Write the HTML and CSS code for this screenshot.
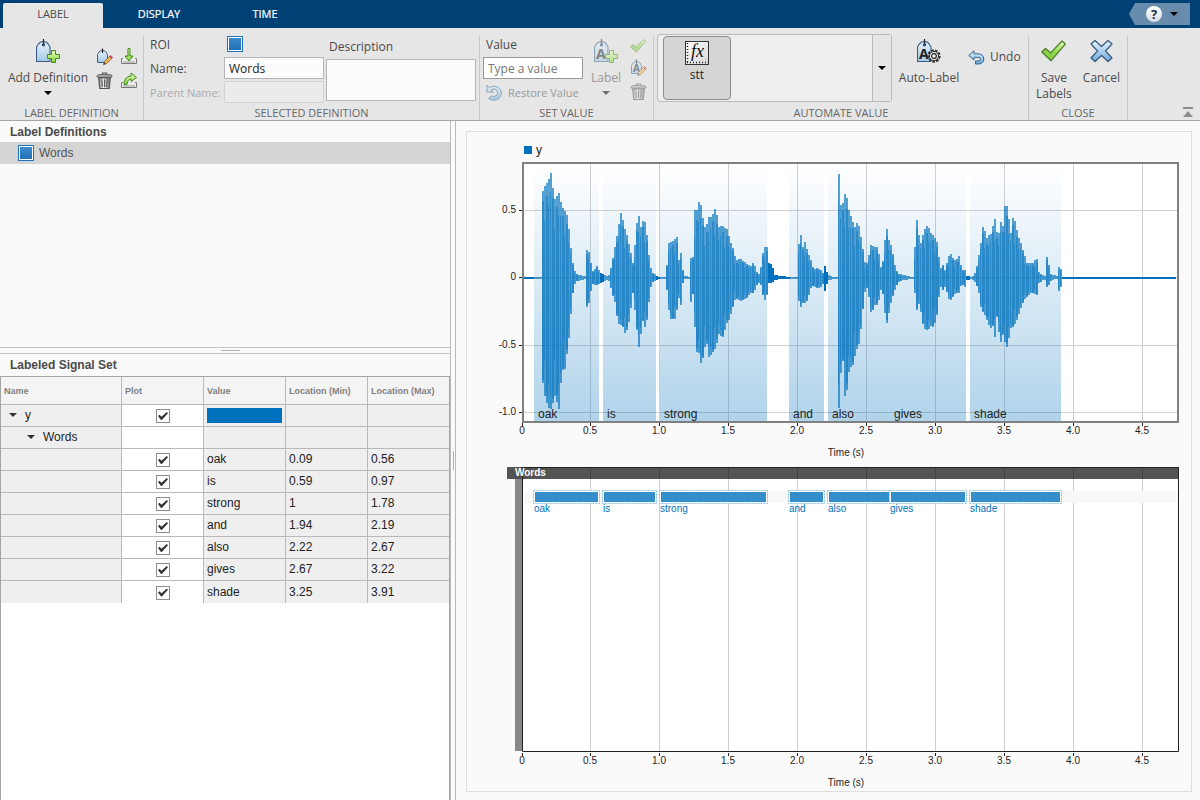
FILE: index.html
```html
<!DOCTYPE html>
<html lang="en">
<head>
<meta charset="utf-8">
<title>Signal Labeler</title>
<link rel="stylesheet" href="styles.css">
</head>
<body>
<svg class="sprite" width="0" height="0" aria-hidden="true">
  <defs>
    <linearGradient id="gTag" x1="0" y1="0" x2="0" y2="1"><stop offset="0" stop-color="#e8f2fa"/><stop offset="1" stop-color="#a4c9e6"/></linearGradient>
    <linearGradient id="gGreen" x1="0" y1="0" x2="0" y2="1"><stop offset="0" stop-color="#f0ffc4"/><stop offset="1" stop-color="#7ed433"/></linearGradient>
    <linearGradient id="gCheck" x1="1" y1="0" x2="0" y2="1"><stop offset="0" stop-color="#f0fcc4"/><stop offset=".5" stop-color="#93d84c"/><stop offset="1" stop-color="#78c43c"/></linearGradient>
    <linearGradient id="gBlue" x1="0" y1="0" x2="0" y2="1"><stop offset="0" stop-color="#eaf6ff"/><stop offset="1" stop-color="#6fa9da"/></linearGradient>
    <linearGradient id="gTrash" x1="0" y1="0" x2="1" y2="0"><stop offset="0" stop-color="#777"/><stop offset=".4" stop-color="#f4f4f4"/><stop offset="1" stop-color="#666"/></linearGradient>
    <linearGradient id="gBox" x1="0" y1="0" x2="1" y2="1"><stop offset="0" stop-color="#fff"/><stop offset="1" stop-color="#d5d5d5"/></linearGradient>
  </defs>
  <symbol id="tag" viewBox="0 0 24 24">
    <path d="M.5 22.500V8L2 5.500Q4 2.500 7.500 2.500Q11 2.500 12.500 5.500L14 8V22.500Z" fill="url(#gTag)" stroke="#3a5f85" stroke-width="1.100"/>
    <path d="M7.500 0V5" stroke="#222" stroke-width="1.200"/><circle cx="7.500" cy="5.800" r="1.700" fill="#2f4f70"/>
  </symbol>
  <symbol id="tag-small" viewBox="0 0 17 17">
    <path d="M1.500 14.500V6.500L3 4Q4.200 2.500 6.500 2.500Q8.800 2.500 10 4L11.500 6.500V14.500Z" fill="url(#gTag)" stroke="#3a5f85"/><path d="M6.500 .5V5" stroke="#222" stroke-width="1.200"/>
  </symbol>
  <symbol id="plus" viewBox="0 0 13 13">
    <path d="M4.500.5H8.500V4.500H12.500V8.500H8.500V12.500H4.500V8.500H.5V4.500H4.500Z" fill="url(#gGreen)" stroke="#3e8a1e"/>
  </symbol>
  <symbol id="i-gear" viewBox="0 0 14 14"><circle cx="7" cy="7" r="5.600" fill="#eee" stroke="#333" stroke-width="2.200" stroke-dasharray="2.600 1.200"/><circle cx="7" cy="7" r="4.600" fill="#ddd" stroke="#333"/><circle cx="7" cy="7" r="2.300" fill="#fff" stroke="#222" stroke-width="1.200"/></symbol>
  <symbol id="pencil" viewBox="0 0 10 10"><path d="M.6 9.400L1.600 6.500L6.500 1.500L8.700 3.600L3.700 8.500Z" fill="#f3b457" stroke="#8a5a20" stroke-width=".8"/><path d="M6.500 1.500L7.600.5L9.600 2.500L8.700 3.600Z" fill="#d8605c" stroke="#a33" stroke-width=".7"/><path d="M.3 9.700L1.200 7.500L2.500 8.900Z" fill="#333"/></symbol>
  <symbol id="i-trash" viewBox="0 0 16 16"><path d="M2.500 5.500H13.500L12.500 15.500H3.500Z" fill="url(#gTrash)" stroke="#555"/><path d="M5.500 7L6 14M8 7V14M10.500 7L10 14" stroke="#555"/><path d="M1 4Q1 2.500 3 2.500H13Q15 2.500 15 4V4.800H1Z" fill="#bbb" stroke="#555" stroke-width=".9"/><path d="M6 2.500V1H10V2.500" fill="none" stroke="#555"/></symbol>
  <symbol id="tray" viewBox="0 0 16 6"><path d="M2 .5H.5V5.500H15.500V.5H14" fill="#ececec" stroke="#777"/><path d="M2 4H14" stroke="#999"/></symbol>
  <symbol id="i-import" viewBox="0 0 16 16"><use href="#tray" y="10" width="16" height="6"/><path d="M7 .5H9V8H12L8 13L4 8H7Z" fill="url(#gGreen)" stroke="#3e8a1e"/></symbol>
  <symbol id="i-export" viewBox="0 0 16 16"><use href="#tray" y="10" width="16" height="6"/><path d="M3 12.500Q3 4.500 10 4V1L15.500 5.500L10 9.500V7Q6.500 7 6 12.500Z" fill="url(#gGreen)" stroke="#3e8a1e"/></symbol>
  <symbol id="i-check" viewBox="0 0 25 22"><path d="M.8 12L4.500 8.500L9.500 12.800L21 1L24.300 4L10 20.800Z" fill="url(#gCheck)" stroke="#4b7d2a" stroke-width="1.200" stroke-linejoin="round"/></symbol>
  <symbol id="i-cross" viewBox="0 0 23 23"><path d="M5 1L11.500 7L18 1L22 4.500L15.500 11.500L22 18.500L18 22L11.500 16L5 22L1 18.500L7.500 11.500L1 4.500Z" fill="url(#gBlue)" stroke="#34587c" stroke-width="1.200" stroke-linejoin="round"/></symbol>
  <symbol id="i-undo" viewBox="0 0 17 15"><path d="M6 .8L.8 5.500L6 10V7.300H10Q12.500 7.500 12.500 9.200Q12.500 11 10 11H7.500V14H10.500Q15.800 13.500 15.800 9Q15.500 4 10 3.800H6Z" fill="url(#gBlue)" stroke="#2f6590" stroke-linejoin="round"/></symbol>
  <symbol id="i-restore" viewBox="0 0 17 17"><path d="M1 1V8H7.500L5.200 6Q8 3.800 10.800 6Q13 9 10.500 11.500Q8 13.300 5.500 12L2.500 14.500Q8 18 13 14.500Q17 10.500 14.500 5.500Q10 0 3.500 3.700Z" fill="url(#gBlue)" stroke="#2f6590" stroke-linejoin="round"/></symbol>
</svg>

<header class="tabbar">
  <nav class="tabs">
    <button class="tab tab-active" type="button">LABEL</button>
    <button class="tab" type="button">DISPLAY</button>
    <button class="tab" type="button">TIME</button>
  </nav>
  <button class="help" type="button" aria-label="Help"><span class="help-mark">?</span><span class="caret"></span></button>
</header>

<div class="toolstrip">
  <section class="group group-definition">
    <div class="group-body">
      <button class="tool tool-large" type="button"><svg width="24" height="24"><use href="#tag" width="24" height="24"/><use href="#plus" x="11" y="11" width="13" height="13"/></svg><span>Add Definition</span><span class="caret"></span></button>
      <div class="icon-grid">
        <button class="icon-button" type="button" aria-label="Edit definition"><svg width="17" height="17"><use href="#tag-small" width="17" height="17"/><use href="#pencil" x="7" y="7" width="10" height="10"/></svg></button>
        <button class="icon-button" type="button" aria-label="Import"><svg width="16" height="16"><use href="#i-import"/></svg></button>
        <button class="icon-button" type="button" aria-label="Delete definition"><svg width="17" height="17"><use href="#i-trash"/></svg></button>
        <button class="icon-button" type="button" aria-label="Export"><svg width="16" height="16"><use href="#i-export"/></svg></button>
      </div>
    </div>
    <h2 class="group-title">LABEL DEFINITION</h2>
  </section>

  <section class="group group-selected">
    <div class="group-body">
      <div class="definition-form">
        <span class="form-top">ROI</span><span class="swatch swatch-form"></span>
        <label for="name">Name:</label><input id="name" class="field" value="Words">
        <label class="disabled-text" for="parent">Parent Name:</label><input id="parent" class="field" disabled>
      </div>
      <div class="description">
        <label for="description">Description</label>
        <textarea id="description" class="field"></textarea>
      </div>
    </div>
    <h2 class="group-title">SELECTED DEFINITION</h2>
  </section>

  <section class="group group-value">
    <div class="group-body">
      <div class="value-form">
        <label for="value">Value</label>
        <input id="value" class="field field-dark" placeholder="Type a value">
        <button class="tool-inline tool-restore" type="button" disabled><svg width="17" height="17"><use href="#i-restore"/></svg>Restore Value</button>
      </div>
      <button class="tool tool-large" type="button" disabled><svg width="24" height="24"><use href="#tag" width="24" height="24"/><text x="2" y="20" class="icon-letter">A</text><use href="#plus" x="11" y="11" width="13" height="13"/></svg><span>Label</span><span class="caret"></span></button>
      <div class="icon-stack">
        <button class="icon-button" type="button" disabled aria-label="Accept"><svg width="16" height="14"><use href="#i-check"/></svg></button>
        <button class="icon-button" type="button" disabled aria-label="Edit label"><svg width="17" height="17"><use href="#tag-small" width="17" height="17"/><text x="3" y="13" class="icon-letter-small">A</text><use href="#pencil" x="7" y="7" width="10" height="10"/></svg></button>
        <button class="icon-button" type="button" disabled aria-label="Delete label"><svg width="17" height="17"><use href="#i-trash"/></svg></button>
      </div>
    </div>
    <h2 class="group-title">SET VALUE</h2>
  </section>

  <section class="group group-automate">
    <div class="group-body">
      <div class="gallery">
        <div class="gallery-items"><button class="gallery-item" type="button"><svg width="24" height="24"><rect x=".5" y=".5" width="23" height="23" fill="url(#gBox)" stroke="#333"/><path d="M2.500 2V22M2 21.500H22" stroke="#222" stroke-width="1.500" stroke-dasharray="1 2"/><text x="6" y="16" class="icon-fx">fx</text></svg>stt</button></div>
        <button class="gallery-more" type="button" aria-label="More algorithms"><span class="caret"></span></button>
      </div>
      <button class="tool tool-large" type="button"><svg width="24" height="24"><use href="#tag" width="24" height="24"/><text x="2" y="20" class="icon-letter">A</text><use href="#i-gear" x="10" y="10" width="14" height="14"/></svg><span>Auto-Label</span></button>
      <button class="tool-inline tool-undo" type="button"><svg width="17" height="15"><use href="#i-undo"/></svg>Undo</button>
    </div>
    <h2 class="group-title">AUTOMATE VALUE</h2>
  </section>

  <section class="group group-close">
    <div class="group-body">
      <button class="tool tool-large" type="button"><svg width="25" height="24"><use href="#i-check"/></svg><span>Save<br>Labels</span></button>
      <button class="tool tool-large" type="button"><svg width="23" height="24"><use href="#i-cross"/></svg><span>Cancel</span></button>
    </div>
    <h2 class="group-title">CLOSE</h2>
  </section>
  <button class="collapse" type="button" aria-label="Collapse toolstrip"></button>
</div>

<main class="workspace">
  <div class="side">
    <section class="definitions">
      <h3 class="pane-title">Label Definitions</h3>
      <div class="definition-row"><span class="swatch"></span>Words</div>
    </section>
    <div class="splitter"></div>
    <section class="signals">
      <h3 class="pane-title signals-title">Labeled Signal Set</h3>
      <div class="table-area">
        <table>
          <colgroup><col class="col-name"><col class="col-data"><col class="col-data"><col class="col-data"><col></colgroup>
          <thead><tr><th>Name</th><th>Plot</th><th>Value</th><th>Location (Min)</th><th>Location (Max)</th></tr></thead>
          <tbody>
            <tr><td><span class="node">y</span></td><td class="plot"><input type="checkbox" checked aria-label="Plot y"></td><td class="color-cell"><div class="color-bar"></div></td><td></td><td></td></tr>
            <tr><td><span class="node node-child">Words</span></td><td class="plot"></td><td></td><td></td><td></td></tr>
            <tr><td></td><td class="plot"><input type="checkbox" checked aria-label="Plot oak"></td><td>oak</td><td>0.09</td><td>0.56</td></tr>
            <tr><td></td><td class="plot"><input type="checkbox" checked aria-label="Plot is"></td><td>is</td><td>0.59</td><td>0.97</td></tr>
            <tr><td></td><td class="plot"><input type="checkbox" checked aria-label="Plot strong"></td><td>strong</td><td>1</td><td>1.78</td></tr>
            <tr><td></td><td class="plot"><input type="checkbox" checked aria-label="Plot and"></td><td>and</td><td>1.94</td><td>2.19</td></tr>
            <tr><td></td><td class="plot"><input type="checkbox" checked aria-label="Plot also"></td><td>also</td><td>2.22</td><td>2.67</td></tr>
            <tr><td></td><td class="plot"><input type="checkbox" checked aria-label="Plot gives"></td><td>gives</td><td>2.67</td><td>3.22</td></tr>
            <tr><td></td><td class="plot"><input type="checkbox" checked aria-label="Plot shade"></td><td>shade</td><td>3.25</td><td>3.91</td></tr>
          </tbody>
        </table>
      </div>
    </section>
  </div>
  <div class="divider"></div>
  <section class="display">
    <svg id="plots" class="plots" viewBox="467 132 724 659" role="img" aria-label="Signal y with labelled words"></svg>
  </section>
</main>
<script src="plots.js"></script>
</body>
</html>
```
FILE: styles.css
```css
* { box-sizing: border-box; }
body { margin: 0; height: 100vh; display: flex; flex-direction: column; overflow: hidden; background: #fafafa; font: 12px/16px "Open Sans", "Noto Sans", sans-serif; color: #4a4a4a; }
button { font: inherit; color: inherit; background: none; border: 0; padding: 0; margin: 0; }
h2, h3 { margin: 0; font-weight: normal; }
svg { display: block; flex: none; }
.sprite { position: absolute; }

.tabbar { display: flex; justify-content: space-between; height: 28px; padding: 3px 10px 0 3px; background: #004175; }
.tabs { display: flex; gap: 6px; }
.tab { width: 100px; font-size: 11px; color: #fff; padding-bottom: 3px; -webkit-text-stroke: 0.2px #fff; }
.tab-active { background: #e6e6e6; color: #4a4a4a; border-radius: 2px 2px 0 0; -webkit-text-stroke: 0; }
.help { display: flex; align-items: center; gap: 8px; width: 61px; height: 22px; padding-left: 17px; background: #688dac; clip-path: polygon(0 50%, 6px 0, 100% 0, 100% 100%, 6px 100%); }
.help-mark { width: 16px; height: 16px; border-radius: 50%; background: linear-gradient(#fff, #d8dde4); color: #1b2f4a; font: bold 13px/16px "Noto Sans", sans-serif; }
.caret { width: 8px; height: 4px; background: #000; clip-path: polygon(0 0, 100% 0, 50% 100%); }

.toolstrip { display: flex; height: 93px; padding-top: 8px; background: #e6e6e6; border-bottom: 1px solid #a6a6a6; }
.group { display: flex; flex-direction: column; border-right: 1px solid #c9c9c9; }
.group-body { display: flex; flex: 1; white-space: nowrap; }
.group-title { height: 15px; font-size: 11px; text-align: center; color: #666; }
.group-definition { width: 144px; }
.group-definition .group-body { padding-left: 8px; }
.group-selected { width: 336px; }
.group-selected .group-body { padding-left: 6px; }
.group-value { width: 174px; }
.group-value .group-body { padding-left: 3px; }
.group-automate { width: 375px; }
.group-automate .group-body { padding-left: 3px; }
.group-close { width: 99px; }
.tool-large { display: flex; flex-direction: column; align-items: center; padding-top: 3px; }
.tool-large svg { margin-bottom: 7px; }
.tool-large .caret { margin-top: 5px; }
.group-definition .tool-large { width: 80px; }
.icon-grid { display: grid; grid-template-columns: 25px 16px; grid-auto-rows: 24px; padding: 8px 0 0 8px; }
.icon-button { display: flex; align-items: center; }
.disabled-text { font-size: 11px; color: #aaa; }
button:disabled { opacity: .5; }
.field { width: 100px; height: 22px; padding: 0 4px; border: 1px solid #b5b5b5; background: #fcfcfc; font: inherit; color: #222; }
.field:disabled { background: #ebebeb; border-color: #d3d3d3; }
.field::placeholder { color: #777; }
.definition-form { display: grid; grid-template-columns: 74px 100px; grid-template-rows: 20px 24px 24px; align-items: center; }
.definition-form label { padding-top: 2px; }
.form-top { align-self: start; padding-top: 1px; }
.swatch { width: 16px; height: 16px; border: 1px solid #1f74bf; background: linear-gradient(#3e8ccc, #1f70b9) content-box, #fff; padding: 1px; }
.swatch-form { align-self: start; margin-left: 3px; }
.description { display: flex; flex-direction: column; padding: 3px 0 0 2px; }
.description label { padding-left: 3px; }
.description textarea { width: 150px; height: 42px; margin-top: 4px; resize: none; }
.value-form { display: flex; flex-direction: column; width: 108px; }
.value-form label { padding: 1px 3px 0; height: 21px; }
.field-dark { border-color: #999; background: #fff; }
.tool-inline { display: flex; align-items: center; gap: 5px; }
.tool-restore { padding: 5px 3px 0; font-size: 11px; }
.icon-stack { display: grid; grid-template-rows: 19px 24px 24px; padding-left: 9px; }
.group-value .tool-large { width: 30px; }

.gallery { display: flex; width: 235px; height: 68px; margin-top: -2px; border: 1px solid #b9b9b9; border-radius: 3px; background: #efefef; }
.gallery-items { flex: 1; padding: 1px 5px; }
.gallery-item { display: flex; flex-direction: column; align-items: center; gap: 2px; width: 68px; height: 64px; padding-top: 4px; border: 1px solid #8c8c8c; border-radius: 4px; background: #d5d5d5; color: #222; }
.gallery-more { display: flex; align-items: center; justify-content: center; width: 19px; border-left: 1px solid #b9b9b9; background: #e6e6e6; }
.group-automate .tool-large { width: 60px; margin-left: 7px; }
.tool-undo { height: 42px; padding-left: 9px; }
.group-close .group-body { justify-content: center; gap: 11px; }
.collapse { display: flex; align-items: flex-end; align-self: flex-end; width: 10px; height: 10px; margin: 0 7px 3px auto; border-top: 2px solid #8e8e8e; }
.collapse::after { content: ""; width: 10px; height: 6px; background: #8e8e8e; clip-path: polygon(50% 0, 100% 100%, 0 100%); }

.workspace { display: flex; flex: 1; min-height: 0; font: 12px/16px "Liberation Sans", Arial, sans-serif; }
.side { display: flex; flex-direction: column; width: 451px; border-right: 1px solid #b9b9b9; }
.definitions { height: 226px; }
.pane-title { padding: 3px 10px 2px; font-size: 12px; font-weight: bold; line-height: 16px; color: #4a4a4a; }
.definition-row { display: flex; align-items: center; gap: 5px; height: 22px; padding-left: 18px; background: #d4d4d4; color: #555; }
.splitter { display: flex; justify-content: center; height: 7px; padding: 2px 0 0 11px; border: solid #c4c4c4; border-width: 1px 0; }
.splitter::after { content: ""; width: 19px; height: 1px; background: #b0b0b0; }
.signals { display: flex; flex-direction: column; flex: 1; min-height: 0; }
.signals-title { padding-bottom: 3px; }
.table-area { flex: 1; background: #fff; border: solid #a6a6a6; border-width: 1px 1px 0; }
table { width: 100%; table-layout: fixed; border-collapse: separate; border-spacing: 0; color: #222; }
.col-name { width: 121px; }
.col-data { width: 82px; }
th { height: 28px; padding: 0 3px; background: #f4f4f4; font-size: 9px; text-align: left; color: #808080; border: solid #b9b9b9; border-width: 0 1px 1px 0; }
td { height: 22px; padding: 0 3px 1px; line-height: 20px; background: #efefef; border: solid #b9b9b9; border-width: 0 1px 1px 0; }
tr > :last-child { border-right: 0; }
tbody tr:last-child td { border-bottom: 0; }
.plot { padding: 0 2px 0 3px; background: #fff; }
.plot input { appearance: none; display: block; width: 14px; height: 14px; margin: 1px auto 0; border: 1px solid #8c8c8c; background: #fff; }
.plot input:checked::after { content: ""; display: block; width: 10px; height: 8px; margin: 2px 1px; background: #333; clip-path: polygon(0 50%, 15% 35%, 35% 60%, 88% 0, 100% 15%, 38% 100%, 30% 100%); }
.color-cell { padding: 0 3px; }
.color-bar { height: 15px; background: #0072bd; }
.node { display: flex; align-items: center; gap: 8px; padding-left: 5px; }
.node::before { content: ""; width: 8px; height: 4px; background: #333; clip-path: polygon(0 0, 100% 0, 50% 100%); }
.node-child { padding-left: 23px; }
.divider { display: flex; align-items: center; justify-content: center; width: 5px; border-right: 1px solid #b9b9b9; }
.divider::after { content: ""; width: 1px; height: 19px; background: #b0b0b0; }
.display { flex: 1; min-width: 0; margin: 10px 8px 8px 10px; border: 1px solid #dedede; }
.plots { width: 100%; height: 100%; }

.icon-letter { font: bold 14px "Noto Sans", sans-serif; fill: #222; }
.icon-letter-small { font: bold 10px "Noto Sans", sans-serif; fill: #223; }
.icon-fx { font: italic 18px "Liberation Serif", serif; fill: #111; }
.tick-text { font-size: 10px; fill: #222; }
.region-text { font-size: 12px; fill: #222; }
.label-text { font-size: 10px; fill: #0072bd; }
.track-title { font-size: 10px; font-weight: bold; fill: #fff; }
```
FILE: plots.js
```js
const svg = document.getElementById('plots');
const NS = 'http://www.w3.org/2000/svg';
const BLUE = '#0072bd';
const tx = t => Math.round(522 + 137.8 * t);
const tickX = t => Math.floor(522 + 137.8 * t);

function add(name, attrs, text) {
  const el = document.createElementNS(NS, name);
  for (const key in attrs) el.setAttribute(key, attrs[key]);
  if (text !== undefined) el.textContent = text;
  svg.appendChild(el);
  return el;
}
const rect = (x, y, width, height, fill, extra = {}) => add('rect', { x, y, width, height, fill, ...extra });
const text = (x, y, cls, value, anchor = 'start') => add('text', { x, y, class: cls, 'text-anchor': anchor }, value);

const words = [['oak', 0.09, 0.56], ['is', 0.59, 0.97], ['strong', 1, 1.78], ['and', 1.94, 2.19],
  ['also', 2.22, 2.67], ['gives', 2.67, 3.22], ['shade', 3.25, 3.91]];

// Envelope of the recording: position, upper edge, lower edge.
const envelope = [
  [522,277,278],[541,277,279],[542,194,376],[545,186,396],[548,182,407],[551,173,409],[553,202,397],[556,198,395],
  [558,193,409],[561,207,370],[564,211,369],[567,217,347],[569,240,328],[571,256,300],[573,270,285],[576,274,281],
  [580,275,280],[586,277,279],[587,250,307],[589,253,298],[591,272,283],[594,271,285],[597,266,285],[599,273,283],
  [604,275,281],[608,277,279],[610,272,283],[612,264,293],[615,247,302],[618,230,323],[621,213,325],[623,227,327],
  [625,230,333],[627,240,327],[629,247,317],[631,258,298],[633,267,287],[635,245,310],[637,223,330],[639,216,347],
  [641,237,320],[643,221,321],[645,223,327],[647,247,313],[649,263,290],[651,272,283],[655,275,280],[658,277,279],
  [665,277,279],[667,265,290],[669,243,310],[671,242,319],[674,240,319],[676,237,310],[678,267,290],[680,253,305],
  [682,270,283],[684,276,279],[689,277,279],[690,259,302],[692,257,290],[694,263,297],[695,210,327],[697,210,352],
  [699,202,353],[701,207,363],[703,228,352],[706,227,338],[709,217,357],[712,217,352],[715,209,348],[718,227,333],
  [722,226,337],[726,229,323],[729,240,318],[732,248,307],[735,260,297],[740,259,301],[745,263,299],[750,267,293],
  [753,263,293],[756,272,285],[760,276,280],[762,258,290],[764,247,300],[767,247,293],[768,263,283],[771,265,283],
  [774,275,280],[780,276,279],[790,277,278],[797,277,278],[798,253,295],[800,235,307],[802,252,303],[804,242,303],
  [807,253,300],[809,257,290],[812,267,285],[814,270,287],[817,268,288],[820,270,287],[823,275,283],[824,266,291],
  [827,275,280],[833,277,279],[837,277,279],[838,174,408],[840,205,373],[842,223,361],[843,203,361],[845,194,396],
  [847,202,383],[849,218,360],[851,216,367],[853,227,362],[855,227,350],[857,223,348],[859,228,340],[861,245,317],
  [863,253,300],[865,270,283],[868,260,290],[871,245,312],[874,247,305],[877,247,305],[880,267,290],[882,271,285],
  [884,250,303],[886,229,323],[888,240,313],[891,247,298],[893,260,293],[895,270,287],[898,274,282],[903,275,280],
  [910,277,279],[914,277,279],[915,247,293],[917,220,310],[919,250,297],[922,240,320],[924,230,328],[927,226,330],
  [930,233,326],[933,236,327],[936,242,315],[938,257,297],[940,270,285],[943,265,290],[945,274,283],[948,258,297],
  [950,254,300],[953,260,295],[956,261,293],[958,256,293],[961,270,282],[964,270,287],[966,276,280],[972,277,279],
  [976,271,283],[979,255,293],[981,243,307],[983,227,312],[986,240,317],[988,235,322],[990,238,328],[992,230,320],
  [995,219,337],[997,245,297],[998,238,327],[1001,222,342],[1003,230,328],[1005,206,342],[1007,206,347],[1009,232,328],
  [1011,233,328],[1013,218,325],[1015,224,323],[1017,235,317],[1020,243,308],[1023,253,300],[1026,263,297],[1030,263,293],
  [1033,263,293],[1036,259,295],[1038,272,283],[1042,275,280],[1046,277,279],[1047,257,287],[1049,273,282],[1053,275,279],
  [1057,276,279],[1059,267,291],[1061,270,283],[1062,277,279],[1178,277,279]
];
function pointAt(x) {
  let i = 1;
  while (envelope[i][0] < x) i++;
  const [x0, a0, b0] = envelope[i - 1], [x1, a1, b1] = envelope[i];
  const f = (x - x0) / (x1 - x0);
  return [a0 + (a1 - a0) * f, b0 + (b1 - b0) * f];
}
// Widest extent of the two pixel columns that start at x.
function extentAt(x) {
  const p = pointAt(x), q = pointAt(x + 1);
  return [Math.round(Math.min(p[0], q[0])), Math.round(Math.max(p[1], q[1]))];
}

function drawSignal() {
  const grad = add('linearGradient', { id: 'region', x1: 0, y1: 0, x2: 0, y2: 1 });
  grad.innerHTML = '<stop offset="0" stop-color="#0072bd" stop-opacity="0"/><stop offset="1" stop-color="#0072bd" stop-opacity=".31"/>';
  rect(524, 146, 8, 8, BLUE);
  text(536, 154, 'region-text', 'y');
  rect(522, 162, 657, 261, '#fff');
  for (let i = 1; i <= 9; i++) rect(tickX(i / 2), 163, 1, 259, '#d0d0d0');
  for (const y of [210, 277, 345, 412]) rect(523, y, 655, 1, '#d0d0d0');
  for (const [, from, to] of words) rect(tx(from), 164, tx(to) - tx(from), 258, 'url(#region)');

  let outer = '', inner = '', quiet = '';
  for (let x = 524; x < 1176; x += 2) {
    const [a, b] = extentAt(x);
    const inside = words.some(w => x >= tx(w[1]) && x < tx(w[2]));
    const step = (x / 2) % 5;
    const shade = [0.9, 0.97, 0.7, 0.94, 0.82][step];
    const bar = (left, width, k) => `M${left} ${Math.round(278 - (278 - a) * (k - .08))}h${width}V${Math.round(278 + (b - 278) * k)}h-${width}z`;
    if (!inside) {
      quiet += `M${x} ${a}h2V${Math.max(b, a + 2)}h-2z`;
      continue;
    }
    outer += `M${x} ${a}h2V${Math.max(b, a + 2)}h-2z`;
    if (b - a > 6) inner += bar(x, step % 2 ? 2 : 1, shade);
  }
  add('path', { d: outer, fill: BLUE, 'fill-opacity': .66, 'shape-rendering': 'crispEdges' });
  add('path', { d: inner, fill: BLUE, 'fill-opacity': .45, 'shape-rendering': 'crispEdges' });
  add('path', { d: quiet, fill: BLUE, 'shape-rendering': 'crispEdges' });

  rect(523, 163, 655, 259, 'none', { stroke: '#808080', 'stroke-width': 2 });
  for (const [word, from] of words) text(tx(from) + 4, 418, 'region-text', word);
  for (const [value, y] of [['0.5', 210], ['0', 277], ['-0.5', 345], ['-1.0', 412]]) {
    rect(519, y, 3, 1, '#222');
    text(516, y + 3, 'tick-text', value, 'end');
  }
}

function drawTimeAxis(y) {
  for (let i = 0; i <= 9; i++) {
    rect(tickX(i / 2), y, 1, 3, '#222');
    text(tickX(i / 2), y + 11, 'tick-text', i ? (i / 2).toFixed(1) : '0', 'middle');
  }
  text(846, y + 33, 'tick-text', 'Time (s)', 'middle');
}

function drawLabels() {
  rect(522, 467, 657, 285, '#fff');
  for (let i = 1; i <= 9; i++) rect(tickX(i / 2), 479, 1, 272, '#d0d0d0');
  rect(515, 479, 7, 272, '#888');
  rect(524, 491, 654, 12, '#f8f8f8');
  rect(507, 467, 672, 12, '#545454');
  for (let i = 1; i <= 9; i++) rect(tickX(i / 2), 468, 1, 11, '#444');
  add('path', { d: 'M522.5 467.5H1178.5V751.5H522.5Z', fill: 'none', stroke: '#222' });
  text(515, 476, 'track-title', 'Words');
  for (const [word, from, to] of words) {
    const x = tx(from), w = tx(to) - x;
    rect(x - .5, 490.5, w + 1, 13, '#fff', { stroke: '#8fc3e4', 'stroke-dasharray': '2 1' });
    rect(x + 1, 492, w - 2, 10, '#338ec9');
    text(x, 512, 'label-text', word);
  }
}

drawSignal();
drawTimeAxis(423);
drawLabels();
drawTimeAxis(753);
```
